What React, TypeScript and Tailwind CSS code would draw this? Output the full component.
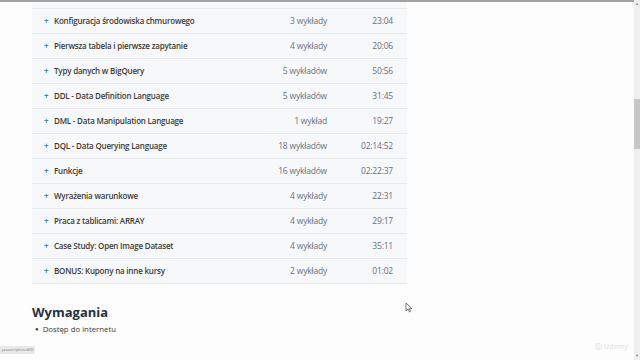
const sections = [
  { title: "Wprowadzenie", lectures: "2 wykłady", time: "05:12" },
  { title: "Konfiguracja środowiska chmurowego", lectures: "3 wykłady", time: "23:04" },
  { title: "Pierwsza tabela i pierwsze zapytanie", lectures: "4 wykłady", time: "20:06" },
  { title: "Typy danych w BigQuery", lectures: "5 wykładów", time: "50:56" },
  { title: "DDL - Data Definition Language", lectures: "5 wykładów", time: "31:45" },
  { title: "DML - Data Manipulation Language", lectures: "1 wykład", time: "19:27" },
  { title: "DQL - Data Querying Language", lectures: "18 wykładów", time: "02:14:52" },
  { title: "Funkcje", lectures: "16 wykładów", time: "02:22:37" },
  { title: "Wyrażenia warunkowe", lectures: "4 wykłady", time: "22:31" },
  { title: "Praca z tablicami: ARRAY", lectures: "4 wykłady", time: "29:17" },
  { title: "Case Study: Open Image Dataset", lectures: "4 wykłady", time: "35:11" },
  { title: "BONUS: Kupony na inne kursy", lectures: "2 wykłady", time: "01:02" },
];

export default function App() {
  return (
    <div
      className="relative flex h-[360px] w-[640px] overflow-hidden bg-[#fdfdfd] text-[#3c3b37]"
      style={{ fontFamily: '"Open Sans", "Noto Sans", sans-serif' }}
    >
      <div className="relative flex-1 overflow-hidden">
        <div className="absolute left-0 right-0 top-0 z-10 h-[2px] bg-[#a3a3a3]" />

        <div className="mt-[-16px] pl-[32px]">
          <div className="w-[375px] bg-[#f7f8fa]">
            {sections.map((s) => (
              <SectionRow key={s.title} {...s} />
            ))}
          </div>

          <h2 className="mt-[19px] text-[13px] font-bold leading-[18px] text-[#29303b]">
            Wymagania
          </h2>
          <ul className="mt-[1px]">
            <li className="flex items-center gap-[4px] pl-[3px] text-[7.8px] leading-[14px] text-[#3c3b37]">
              <span className="text-[6px]">●</span>
              Dostęp do internetu
            </li>
          </ul>
        </div>

        <div className="absolute left-0 top-[346px] bg-[#e9e9e9] px-[2px] text-[4px] leading-[8px] text-[#777]">
          javascript:void(0)
        </div>

        <svg className="absolute left-[405px] top-[302px]" width="8" height="11" viewBox="0 0 8 11">
          <path d="M1 1 L1 9 L3 7 L4.5 10 L5.5 9.5 L4.2 6.6 L7 6.6 Z" fill="#fff" stroke="#555" strokeWidth="0.8" />
        </svg>

        <div className="absolute right-[6px] top-[342px] text-[7px] font-semibold text-[#e6e6e6]">
          Ⓤ Udemy
        </div>
      </div>

      <div className="flex w-[6px] flex-col bg-[#efefef]">
        <div className="mx-auto mt-[2px] text-[4px] leading-[4px] text-[#888]">▲</div>
        <div className="mt-[93px] h-[50px] bg-[#c6c6c6]" />
        <div className="mt-auto mb-[2px] text-center text-[4px] leading-[4px] text-[#888]">▼</div>
      </div>
    </div>
  );
}

function SectionRow({ title, lectures, time }: { title: string; lectures: string; time: string }) {
  return (
    <div className="flex h-[25px] items-center border-b border-[#e8e9eb] pl-[12px] pr-[14px]">
      <span className="w-[10px] text-[8px] font-bold leading-none text-[#3a8fa0]">+</span>
      <span className="flex-1 text-[8px] font-semibold tracking-[-0.2px] text-[#3c3b37]">{title}</span>
      <span className="w-[80px] text-right text-[8.5px] tracking-[-0.2px] text-[#686f7a]">{lectures}</span>
      <span className="w-[66px] text-right text-[8.5px] tracking-[-0.2px] text-[#686f7a]">{time}</span>
    </div>
  );
}
